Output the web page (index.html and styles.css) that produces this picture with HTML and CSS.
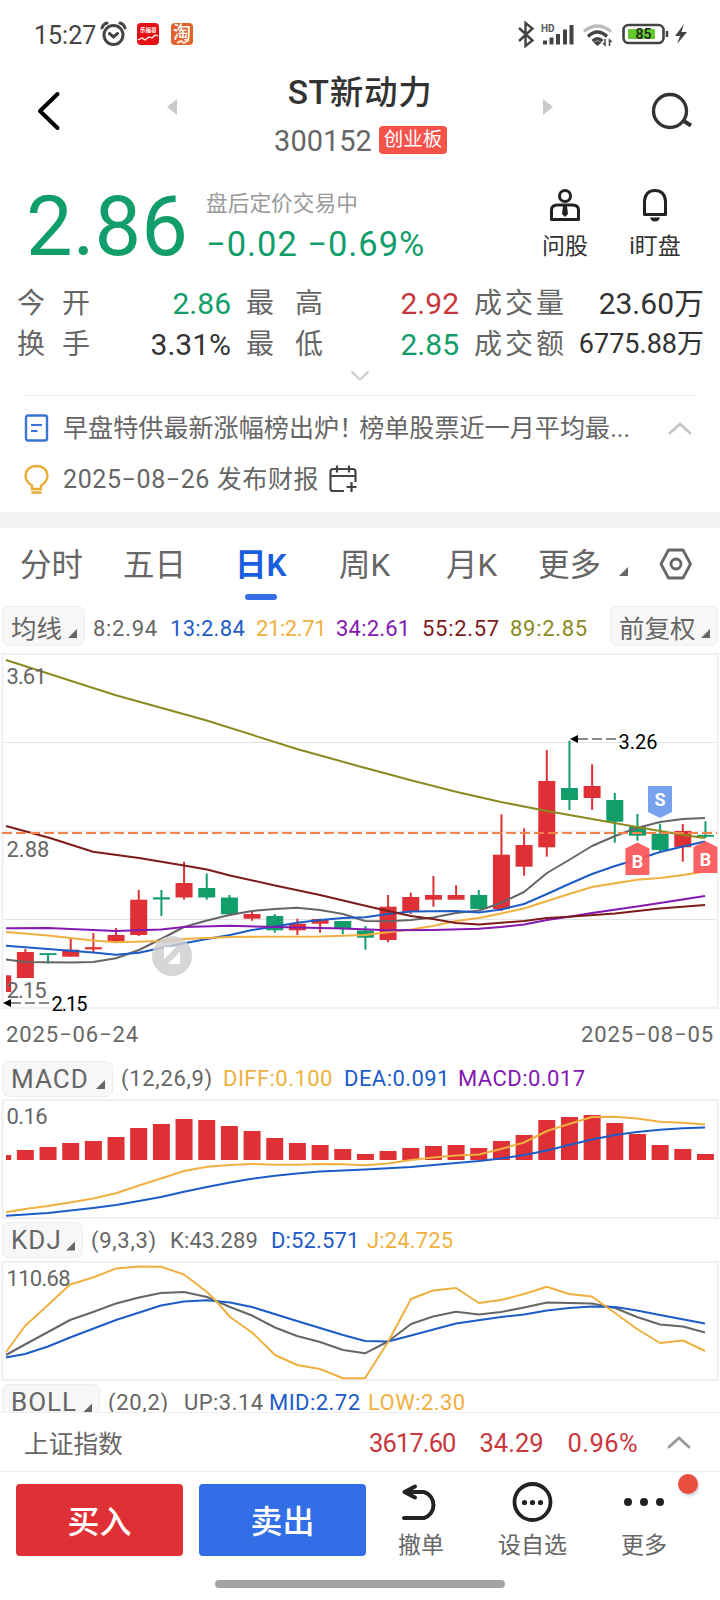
FILE: index.html
```
<!DOCTYPE html>
<html lang="zh-CN">
<head>
    <meta charset="UTF-8">
    <meta name="viewport" content="width=device-width, initial-scale=1.0">
    <title>ST新动力 300152</title>
    <link rel="stylesheet" href="styles.css">
</head>
<body>
    <div class="status-bar">
        <span class="clock">15:27</span>
        <svg class="status-left" width="100" height="32" viewBox="96 18 100 32">
            <g fill="none" stroke="#444" stroke-width="3" stroke-linecap="round">
                <circle cx="113.5" cy="35" r="9.5"/>
                <path d="M109.500 33.500l4 3.500 4-3.500M102 28q1-4 5-5M125 28q-1-4-5-5"/>
            </g>
            <rect x="137" y="23" width="22" height="22" rx="4" fill="#e60f14"/>
            <text x="140" y="32" font-size="5.500" font-weight="700" fill="#fff">乐福哥</text>
            <path d="M138 40l4-2 3 2 4-3 3 1 3-3 3 1" fill="none" stroke="#fff" stroke-width="1.300"/>
            <rect x="171" y="23" width="22" height="22" rx="4" fill="#e0622c"/>
            <text x="173" y="39" font-size="18" font-weight="500" fill="#fff">淘</text>
            <path d="M177 43l4-2 3 2 5-3" fill="none" stroke="#fbe3d0" stroke-width="2"/>
        </svg>
        <svg class="status-right" width="176" height="32" viewBox="514 18 176 32">
            <path d="M519 28l13.500 12.500-7 5.500V23l7 5.500L519 41" fill="none" stroke="#444" stroke-width="2.400"/>
            <text x="541" y="32" font-size="10" font-weight="700" fill="#555">HD</text>
            <path d="M545 44.500v-4M551.500 44.500v-7M558 44.500V34M565 44.500V29.500M571.500 44.500V25" stroke="#444" stroke-width="4"/>
            <g fill="none" stroke="#444" stroke-width="3.200">
                <path d="M584 31.500q13-11 27 0" stroke="#bbb"/>
                <path d="M588 36.500q9.500-9 19 0M592.500 41q5-4.500 10 0"/>
            </g>
            <path d="M593.500 42.500l4 3.500 4-3.500q-4-3-8 0z" fill="#444"/>
            <path d="M605 39v6l-2-2M609.500 46v-6l2 2" fill="none" stroke="#444" stroke-width="1.500"/>
            <rect x="623.500" y="25" width="40" height="18" rx="5" fill="none" stroke="#444" stroke-width="2.600"/>
            <rect x="628" y="29" width="27" height="10" rx="1" fill="#63c92c"/>
            <path d="M667 31v6" stroke="#444" stroke-width="2.500"/>
            <text x="635.500" y="38.500" font-size="14" font-weight="500" fill="#222">85</text>
            <path d="M684 24l-9 12h5l-3 8 10-12h-5.500z" fill="#444"/>
        </svg>
    </div>

    <header class="header">
        <svg class="icon-back" width="30" height="42" viewBox="0 0 30 42"><path d="M22.500 4L5 21l17.500 17" fill="none" stroke="#000" stroke-width="4" stroke-linecap="round" stroke-linejoin="round"/></svg>
        <svg class="icon-prev" width="10" height="16" viewBox="0 0 10 16"><path d="M10 0v16L0 8z" fill="#cacaca"/></svg>
        <div class="title-box">
            <h1>ST新动力</h1>
            <div class="code-row"><span class="code">300152</span><span class="board">创业板</span></div>
        </div>
        <svg class="icon-next" width="10" height="16" viewBox="0 0 10 16"><path d="M0 0v16l10-8z" fill="#cacaca"/></svg>
        <svg class="icon-search" width="42" height="40" viewBox="0 0 42 40"><circle cx="20" cy="20" r="16.500" fill="none" stroke="#333" stroke-width="3.400"/><path d="M33 29.500l8 5" stroke="#333" stroke-width="4"/></svg>
    </header>

    <section class="quote">
        <div class="price">2.86</div>
        <div class="change">
            <div class="phase">盘后定价交易中</div>
            <div class="diff">−0.02 −0.69%</div>
        </div>
        <div class="quick">
            <svg width="32" height="34" viewBox="0 0 32 34">
                <g fill="none" stroke="#222" stroke-width="3">
                    <circle cx="16" cy="8" r="5.500"/>
                    <path d="M2.500 31.500V22q0-5 6-5h15q6 0 6 5v9.500z" stroke-linejoin="round"/>
                </g>
                <path d="M14 18h4l1 8-3 3-3-3z" fill="#222"/>
            </svg>
            <span>问股</span>
        </div>
        <div class="quick bell">
            <svg width="32" height="34" viewBox="0 0 32 34">
                <path d="M5.500 26.500V13q1-10.500 10.500-10.500T26.500 13v13.500z" fill="none" stroke="#222" stroke-width="3" stroke-linejoin="round"/>
                <path d="M11 29.500h10q-1 4-5 4t-5-4z" fill="#222"/>
            </svg>
            <span>i盯盘</span>
        </div>
    </section>

    <section class="stats">
        <span class="label"><i>今</i><i>开</i></span><b class="down">2.86</b>
        <span class="label"><i>最</i><i>高</i></span><b class="up">2.92</b>
        <span class="label"><i>成</i><i>交</i><i>量</i></span><b>23.60万</b>
        <span class="label"><i>换</i><i>手</i></span><b>3.31%</b>
        <span class="label"><i>最</i><i>低</i></span><b class="down">2.85</b>
        <span class="label"><i>成</i><i>交</i><i>额</i></span><b class="small">6775.88万</b>
    </section>
    <div class="expand"><svg width="20" height="12" viewBox="0 0 20 12"><path d="M1.500 1.500L10 9.500l8.500-8" fill="none" stroke="#c8c8c8" stroke-width="2"/></svg></div>

    <section class="news">
        <div class="news-row">
            <svg width="26" height="30" viewBox="0 0 26 30"><rect x="3" y="2.500" width="21" height="25" rx="2" fill="none" stroke="#3b74d8" stroke-width="2.400"/><path d="M8 12h11M8 18h6.500" stroke="#3b74d8" stroke-width="2.200"/></svg>
            <span class="news-text">早盘特供最新涨幅榜出炉<i class="mark">！</i>榜单股票近一月平均最...</span>
            <svg class="fold" width="24" height="14" viewBox="0 0 24 14"><path d="M2 12L12 3l10 9" fill="none" stroke="#c8c8c8" stroke-width="3" stroke-linecap="round"/></svg>
        </div>
        <div class="news-row">
            <svg width="26" height="30" viewBox="0 0 26 30"><path d="M9 25v-3.500Q2.500 17.500 2.500 11.500 3.500 2 13.500 2t11 9.500Q24.500 17.500 18 21.500V25zM8.500 28.500h10" fill="none" stroke="#ecab33" stroke-width="2.300"/></svg>
            <span class="report">2025−08−26 发布财报</span>
            <svg class="calendar" width="28" height="28" viewBox="0 0 28 28"><path d="M15 26H4q-2.500 0-2.500-2.500V7Q1.500 4 4 4h20q2.500 0 2.500 3v10M1.500 11h25M8 .5v7M20 .5v7M17.500 22h10M22.500 17v10" fill="none" stroke="#444" stroke-width="2.200"/></svg>
        </div>
    </section>

    <nav class="tabs">
        <span>分时</span>
        <span>五日</span>
        <span class="active">日K</span>
        <span>周K</span>
        <span>月K</span>
        <span class="more">更多<i class="corner"></i></span>
        <svg width="34" height="32" viewBox="0 0 34 32"><path d="M9.500 2h14.500L31.500 16 24 30H9.500L2 16z" fill="none" stroke="#666" stroke-width="2.800" stroke-linejoin="round"/><circle cx="17" cy="16" r="5" fill="none" stroke="#666" stroke-width="2.800"/></svg>
    </nav>

    <section class="charts">
        <div class="ma-bar">
            <span class="picker">均线<i class="corner"></i></span>
            <span class="c-gray">8:2.94</span>
            <span class="c-blue">13:2.84</span>
            <span class="c-orange">21:2.71</span>
            <span class="c-purple">34:2.61</span>
            <span class="c-red">55:2.57</span>
            <span class="c-olive">89:2.85</span>
            <span class="picker">前复权<i class="corner"></i></span>
        </div>

        <!-- all charts share one vertical scale, each viewBox is a slice of it -->
        <svg class="chart" id="kline" width="720" height="364" viewBox="0 648 720 364">
            <path class="grid" d="M4 742.500h712M4 831h712M4 919.500h712"/>
            <rect class="frame" x="2.500" y="654" width="715" height="354"/>
        </svg>

        <div class="dates"><span>2025−06−24</span><span>2025−08−05</span></div>

        <div class="ind-bar macd">
            <span class="picker">MACD<i class="corner"></i></span>
            <span class="c-gray params">(12,26,9)</span>
            <span class="c-orange">DIFF:0.100</span>
            <span class="c-blue">DEA:0.091</span>
            <span class="c-purple">MACD:0.017</span>
        </div>
        <svg class="chart" id="macd" width="720" height="124" viewBox="0 1097 720 124">
            <rect class="frame" x="2.500" y="1100" width="715" height="118"/>
        </svg>

        <div class="ind-bar kdj">
            <span class="picker">KDJ<i class="corner"></i></span>
            <span class="c-gray params">(9,3,3)</span>
            <span class="c-gray">K:43.289</span>
            <span class="c-blue">D:52.571</span>
            <span class="c-orange">J:24.725</span>
        </div>
        <svg class="chart" id="kdj" width="720" height="124" viewBox="0 1259 720 124">
            <rect class="frame" x="2.500" y="1262" width="715" height="118"/>
        </svg>

        <div class="ind-bar boll">
            <span class="picker">BOLL<i class="corner"></i></span>
            <span class="c-gray params">(20,2)</span>
            <span class="c-gray">UP:3.14</span>
            <span class="c-blue">MID:2.72</span>
            <span class="c-orange">LOW:2.30</span>
        </div>
    </section>

    <div class="index-bar">
        <span class="index-name">上证指数</span>
        <span class="index-value">3617.60</span>
        <span>34.29</span>
        <span class="index-rate">0.96%</span>
        <svg width="24" height="14" viewBox="0 0 24 14"><path d="M2 12L12 3l10 9" fill="none" stroke="#999" stroke-width="2.800" stroke-linecap="round"/></svg>
    </div>

    <footer class="actions">
        <button class="buy">买入</button>
        <button class="sell">卖出</button>
        <div class="action">
            <svg width="42" height="40" viewBox="0 0 42 40"><path d="M4 36h20a13 13.500 0 0 0 0-26H5M15 4.500L4.500 10 15 15.500" fill="none" stroke="#222" stroke-width="4" stroke-linecap="round" stroke-linejoin="round"/></svg>
            <span>撤单</span>
        </div>
        <div class="action">
            <svg width="42" height="40" viewBox="0 0 42 40"><circle cx="20.500" cy="20" r="18" fill="none" stroke="#222" stroke-width="3.800"/><g fill="#222"><circle cx="12.500" cy="20.500" r="2.600"/><circle cx="20.500" cy="20.500" r="2.600"/><circle cx="28.500" cy="20.500" r="2.600"/></g></svg>
            <span>设自选</span>
        </div>
        <div class="action">
            <svg width="42" height="40" viewBox="0 0 42 40"><g fill="#222"><circle cx="5" cy="20" r="4"/><circle cx="21" cy="20" r="4"/><circle cx="37" cy="20" r="4"/></g></svg>
            <span>更多</span>
            <i class="dot"></i>
        </div>
    </footer>
    <div class="home-bar"></div>

    <script>
        const RED = "#df3135", GREEN = "#129e6b";
        const STEP = 22.67, START = 2.7;

        // [color, high, top, bottom, low]
        const candles = [
            ["r", 975.3, 975.3, 992, 992], ["r", 949, 952, 978, 978], ["g", 953.2, 953.2, 955, 963.5],
            ["r", 938.7, 949.7, 956.7, 956.7], ["r", 933, 947.2, 949.4, 952], ["r", 928, 935, 941.7, 941.7],
            ["r", 890, 899.7, 935, 936], ["g", 890, 897.3, 899.5, 916], ["r", 861.7, 883, 897.5, 899.7],
            ["g", 873.5, 888, 897.5, 899.7], ["g", 895, 897.5, 914.3, 915.3], ["r", 911.3, 914, 918.7, 920.7],
            ["g", 914, 916, 930.3, 932.7], ["r", 918.7, 923.7, 930.3, 935], ["r", 918.7, 919, 923.7, 932.7],
            ["g", 921, 921, 928.3, 934.3], ["g", 926, 930.5, 937.7, 949.7], ["r", 895, 906.7, 940, 942.3],
            ["r", 892.7, 897, 911.7, 914], ["r", 876, 895, 899.7, 906.7], ["r", 885.3, 895, 899.7, 899.7],
            ["g", 890, 895, 909, 909], ["r", 814.3, 854.7, 909, 911], ["r", 828.3, 845, 866.7, 875.7],
            ["r", 750, 781, 847.3, 856.7], ["g", 740.7, 788, 800, 810], ["r", 764.3, 786, 798, 810],
            ["g", 793, 800, 821.7, 842.7], ["g", 814, 826.7, 835.7, 840.7], ["g", 823.7, 833.7, 850, 852],
            ["r", 824, 831, 847.3, 861.7], ["g", 821.3, 834.8, 836.8, 838]
        ];

        // tops of the MACD columns, baseline is 1160
        const macdBars = [1155, 1150, 1147, 1143, 1141, 1137, 1128, 1124, 1119, 1120, 1126, 1131, 1138, 1143, 1145, 1149,
            1154, 1151, 1148, 1146, 1145, 1148, 1141, 1135, 1120, 1117, 1115, 1123, 1134, 1145, 1149, 1154];

        const lines = {
            kline: [
                ["#666666", "6,959.5 25,962 70,962.5 93,962 116,958.3 139,950 161,939 184,927 207,920.5 229.5,915 252,911 275,909 297,907.7 320,910 343,914 365,921 388,921.3 411,920 433,917.5 456,913 479,910.5 501,903 524,892 547,873 569,860 592,846 615,836 637,828 660,822 683,819 705,818"],
                ["#1c5cc8", "6,945.7 48,949 93,952.5 116,954.7 139,952.7 161,948 184,943.3 207,939 230,935 252,930 275,926.5 297,922.7 320,920 343,918 365,917.3 388,914 411,911.5 456,911 479,912.5 501,909.5 524,904 547,894 569,884 592,874 615,866 637,859.5 660,852 683,846.5 705,841.5"],
                ["#f0b040", "6,932 48,935.5 93,940.5 116,942.3 161,941 184,939 230,937 320,936.5 365,935 411,929.5 433,926 456,921 479,918 501,913.5 524,908.5 547,901 569,894 592,887 637,879.7 660,878 683,875 705,871.5"],
                ["#8418b0", "6,928.3 48,928 93,930 116,931 161,929.5 184,927 230,925.7 275,927 343,928.5 388,930.3 433,930 479,928.7 501,927 524,924.5 547,920 569,916.7 592,913 637,906.5 660,903 705,896"],
                ["#7d1a1a", "6,826 50,838 93,851.7 139,858 184,865.5 207,869.5 230,875.5 275,885.5 320,895 360,904.5 388,911 411,916 433,919 456,923 479,924.5 501,922.7 524,921 547,918 569,916.7 615,913.5 660,908.5 705,905"],
                ["#8a8a20", "6,660 115,695 205,720 297,749 360,766.5 410,780 457,792 501,802 547,811 592,819 637,827 660,831 683,835 705,838"]
            ],
            macd: [
                ["#f0b040", "6,1212.3 25,1209 48,1206 70,1202.5 93,1198.5 116,1193.3 139,1185.5 161,1178.5 184,1171 207,1166.7 230,1165 252,1164 275,1164.7 297,1164.7 320,1164 343,1164.3 365,1165.3 388,1163.5 411,1160 433,1157.5 456,1155.5 479,1154.5 501,1149 524,1142.5 547,1131 569,1124 592,1117 615,1116.7 637,1118.5 660,1121.7 683,1122.7 705,1124.5"],
                ["#1c5cc8", "6,1215.7 48,1213 93,1208 116,1205 139,1201 161,1197 184,1191.7 207,1187 230,1182.5 252,1178.7 275,1175.7 297,1173.5 320,1171.5 365,1169.5 411,1167 456,1163 479,1161 501,1158.5 524,1155 547,1150.5 569,1145 592,1139.5 615,1135 637,1132 660,1129.7 683,1128.3 705,1127.5"]
            ],
            kdj: [
                ["#666666", "6,1355 25,1344.5 48,1332 70,1320 93,1312 116,1303.5 139,1297.5 161,1293 184,1292 207,1297 230,1307 252,1315.5 275,1327.5 297,1336 320,1342 343,1350 365,1353.3 388,1341.5 411,1324 433,1316.5 456,1311.7 479,1314.5 501,1312 524,1307.5 547,1302.5 592,1303.5 615,1308 637,1317 660,1324.5 683,1326.5 705,1332.5"],
                ["#1c5cc8", "6,1357.5 25,1354 48,1346.5 70,1337.5 116,1320 161,1305.5 184,1301.5 207,1300.3 230,1302.5 252,1307 297,1321 343,1335 365,1341 388,1341.5 411,1335.5 456,1323.5 501,1317 524,1314.5 547,1310.5 569,1308 592,1306.5 615,1307 637,1310.5 660,1315 705,1323.5"],
                ["#f0b040", "6,1352 25,1326 48,1305 70,1284.5 93,1277.5 116,1268.5 139,1266.5 161,1266.7 184,1274.5 207,1292 218,1303 230,1317 252,1332.5 275,1355 297,1365 320,1369 343,1378.3 365,1378.3 388,1342 411,1299 433,1290.5 456,1288 479,1303 501,1300 524,1294 547,1286.7 569,1294 592,1296.5 615,1313 637,1329 660,1343 683,1340.5 705,1351"]
            ]
        };

        function draw(id, markup) {
            document.getElementById(id).insertAdjacentHTML("beforeend", markup);
        }

        // the first column is cut off at the left edge of the plot
        function column(x, top, bottom, fill) {
            const left = Math.max(6, x - 8.5);
            return `<rect x="${left}" y="${top}" width="${x + 8.5 - left}" height="${bottom - top}" fill="${fill}"/>`;
        }

        candles.forEach(([c, high, top, bottom, low], i) => {
            const x = START + STEP * i;
            const fill = c === "r" ? RED : GREEN;
            if (i > 0) {
                draw("kline", `<path d="M${x} ${high}V${low}" stroke="${fill}" stroke-width="2"/>`);
            }
            draw("kline", column(x, top, bottom, fill));
        });

        macdBars.forEach((top, i) => draw("macd", column(START + STEP * i, top, 1160, RED)));

        for (const id in lines) {
            lines[id].forEach(([color, points]) => {
                draw(id, `<polyline class="line" points="${points}" stroke="${color}"/>`);
            });
        }

        // last price, trade marks and labels
        draw("kline", `
            <path class="last" d="M2 833H717"/>
            <path d="M648 786h24v26l-12 6-12-6z" fill="#78a2ee"/>
            <text class="mark-text" x="660" y="806">S</text>
            <path d="M637.400 842.500l12 6V875h-24v-26.500z" fill="#fb5658" fill-opacity=".93"/>
            <text class="mark-text" x="637.400" y="867.500">B</text>
            <path d="M705.400 841l12 6v26h-24v-26z" fill="#fb5658" fill-opacity=".93"/>
            <text class="mark-text" x="705.400" y="865.500">B</text>
            <circle cx="172" cy="956" r="20" fill="#cfcfcf" fill-opacity=".85"/>
            <path d="M164 947h12l-12 12zM180 952v12h-12z" fill="#fff"/>
            <text class="axis" x="6.500" y="683.500" textLength="40">3.61</text>
            <text class="axis" x="6.500" y="857">2.88</text>
            <text class="axis" x="6.500" y="998" textLength="40">2.15</text>
            <path d="M570 739l8-4v8zM3 1003l8-4v8z"/>
            <path class="lead" d="M578 739h38M11 1003h38"/>
            <text class="peak" x="618.500" y="749">3.26</text>
            <text class="peak" x="51.500" y="1010.500" textLength="36">2.15</text>`);
        draw("macd", `<text class="axis" x="6.500" y="1124" textLength="41">0.16</text>`);
        draw("kdj", `<text class="axis" x="6.500" y="1286" textLength="64">110.68</text>`);
    </script>
</body>
</html>
```
FILE: styles.css
```
:root {
    --up: #c9373c;
    --down: #129e6b;
    --text: #333;
    --muted: #666;
    --blue: #1c5cc8;
    --line: #eee;
}

* {
    box-sizing: border-box;
}

body {
    margin: 0;
    width: 720px;
    height: 1600px;
    overflow: hidden;
    display: flex;
    flex-direction: column;
    background: #fff;
    color: var(--text);
    font-family: Roboto, "Noto Sans CJK SC", sans-serif;
}

body > * {
    flex-shrink: 0;
}

i {
    font-style: normal;
}

svg {
    display: block;
    flex-shrink: 0;
}

/* status bar */
.status-bar {
    height: 68px;
    padding: 0 30px 0 34px;
    display: flex;
    align-items: center;
}

.clock {
    width: 62px;
    font-size: 25px;
    line-height: 30px;
    color: #444;
    padding-top: 3px;
}

.status-right {
    margin-left: auto;
}

/* header */
.header {
    height: 100px;
    display: flex;
    padding-left: 35px;
}

.icon-back {
    margin-top: 22px;
}

.icon-prev {
    margin: 31px 0 0 102px;
}

.title-box {
    width: 366px;
    text-align: center;
}

h1 {
    margin: 3px 0 0;
    font-size: 33.5px;
    font-weight: 500;
    line-height: 44px;
    letter-spacing: 0.7px;
}

.code-row {
    display: flex;
    justify-content: center;
    align-items: center;
    margin: 8px 0 0 1px;
    height: 34px;
}

.code {
    font-size: 29px;
    color: var(--muted);
    margin-right: 7px;
    padding-top: 1px;
}

.board {
    height: 28px;
    width: 68px;
    border-radius: 4px;
    background: #f5524a;
    color: #fff;
    font-size: 19.5px;
    line-height: 27px;
}

.icon-next {
    margin-top: 31px;
}

.icon-search {
    margin: 23px 0 0 97px;
}

/* quote */
.quote {
    height: 108px;
    display: flex;
    padding: 20px 0 0 26px;
}

.price {
    width: 180px;
    font-size: 83px;
    line-height: 78px;
    color: var(--down);
}

.change {
    width: 320px;
}

.phase {
    font-size: 21.7px;
    line-height: 28px;
    padding-top: 2px;
    color: #999;
}

.diff {
    margin-top: 5px;
    font-size: 34.5px;
    line-height: 42px;
    letter-spacing: 0.95px;
    color: var(--down);
}

.quick {
    width: 78px;
    display: flex;
    flex-direction: column;
    align-items: center;
    font-size: 23px;
    line-height: 30px;
}

.quick span {
    margin-top: 10px;
    white-space: nowrap;
}

.bell {
    margin-left: 12px;
}

/* stats */
.stats {
    display: grid;
    grid-template-columns: 73px 141px 92px 136px 105px 140px;
    grid-auto-rows: 41px;
    height: 88px;
    padding: 7px 0 0 17px;
}

.stats .label {
    display: flex;
    justify-content: space-between;
    color: var(--muted);
    font-size: 28px;
    line-height: 41px;
}

.stats .label:not(:nth-child(6n + 1)) {
    padding-left: 15px;
}

.stats b {
    font-weight: 400;
    font-size: 30px;
    line-height: 41px;
    text-align: right;
}

.stats .small {
    font-size: 27px;
}

.stats .up {
    color: var(--up);
}

.stats .down {
    color: var(--down);
}

.expand {
    height: 31px;
    display: flex;
    justify-content: center;
    padding-top: 6px;
}

/* news */
.news {
    margin: 0 23px;
    height: 117px;
    border-top: 1px solid #ececec;
    padding-top: 6px;
    color: var(--muted);
    font-size: 25px;
}

.news-row {
    display: flex;
    align-items: center;
    height: 51px;
}

.news-row span {
    margin-left: 14px;
    padding-bottom: 4px;
    white-space: nowrap;
}

.news-text {
    letter-spacing: 0.1px;
}

.report {
    letter-spacing: 0.6px;
}

.mark {
    letter-spacing: -5px;
}

.fold {
    margin-left: auto;
    margin-right: 5px;
}

.calendar {
    margin-left: 10px;
}

/* period tabs */
.tabs {
    height: 90px;
    border-top: 16px solid #f4f4f4;
    padding: 0 27px 0 20px;
    display: grid;
    grid-template-columns: 103px 112px 104px 107px 92px 1fr auto;
    align-items: start;
    color: var(--muted);
    font-size: 31.5px;
    line-height: 75px;
}

.tabs span {
    white-space: nowrap;
}

.tabs svg {
    margin-top: 20px;
}

.tabs .active {
    color: #1a5ee0;
    font-weight: 600;
    display: flex;
    flex-direction: column;
}

.tabs .active::after {
    content: "";
    width: 32px;
    height: 6px;
    margin: -9px 0 0 10px;
    border-radius: 3px;
    background: #356fe6;
}

.corner {
    display: inline-block;
    width: 9px;
    height: 9px;
    background: var(--muted);
    clip-path: polygon(100% 0, 100% 100%, 0 100%);
}

.tabs .corner {
    margin-left: 18px;
}

/* charts */
.charts {
    height: 810px;
    overflow: hidden;
    font-size: 22px;
}

.c-gray { color: var(--muted); }
.c-blue { color: var(--blue); }
.c-orange { color: #f0b040; }
.c-purple { color: #8418b0; }
.c-red { color: #7d1a1a; }
.c-olive { color: #8a8a20; }

.picker {
    border: 1px solid var(--line);
    border-radius: 7px;
    background: #f7f7f7;
    color: var(--muted);
    font-size: 25.5px;
    height: 100%;
    padding: 0 7px 0 8px;
    display: flex;
    align-items: center;
    justify-content: space-between;
}

.picker .corner {
    margin-top: 15px;
}

.ma-bar {
    display: grid;
    grid-template-columns: 91px 77px 86px 80px 86px 88px 100px 108px;
    align-items: center;
    height: 46px;
    padding: 4px 0 2px 2px;
    letter-spacing: 0.7px;
}

.ma-bar .c-gray,
.ma-bar .c-blue,
.ma-bar .c-orange,
.ma-bar .c-purple,
.ma-bar .c-red,
.ma-bar .c-olive {
    padding-top: 4px;
}

.ma-bar .c-blue {
    letter-spacing: 0.3px;
}

.ma-bar .c-orange {
    letter-spacing: -0.4px;
}

.ma-bar .c-purple {
    letter-spacing: 0.2px;
}

.ma-bar .picker {
    letter-spacing: 0;
}

.ma-bar .picker:first-child {
    margin-right: 8px;
}

.frame {
    fill: none;
    stroke: #f0f0f0;
    stroke-width: 2;
}

.grid {
    stroke: #e2e2e2;
    stroke-width: 1;
}

.line {
    fill: none;
    stroke-width: 2;
    stroke-linejoin: round;
}

.last {
    stroke: #f5824a;
    stroke-width: 2;
    stroke-dasharray: 10 4;
}

.lead {
    stroke: #666;
    stroke-width: 1.5;
    stroke-dasharray: 10 4;
}

.axis {
    font-size: 22px;
    fill: var(--muted);
}

.peak {
    font-size: 20px;
    fill: #000;
}

.mark-text {
    font-size: 18px;
    font-weight: 700;
    fill: #fff;
    text-anchor: middle;
}

.dates {
    height: 48px;
    display: flex;
    justify-content: space-between;
    padding: 0 6px 0 6px;
    line-height: 46px;
    letter-spacing: 0.9px;
    color: var(--muted);
}

.ind-bar {
    display: grid;
    align-items: center;
    height: 37px;
    padding-left: 2px;
    letter-spacing: 0.45px;
}

.ind-bar .picker {
    height: 36px;
    font-size: 26px;
    letter-spacing: 1px;
}

.ind-bar .picker .corner {
    margin-top: 12px;
}

.macd { grid-template-columns: 111px 100px 121px 114px 140px; }
.kdj { grid-template-columns: 81px 77px 101px 96px 110px; height: 38px; letter-spacing: 0.15px; }
.boll { grid-template-columns: 98px 74px 85px 99px 120px; padding-top: 1px; }

.ind-bar .params {
    padding-left: 8px;
    letter-spacing: 0.7px;
}

.ind-bar .params ~ span {
    padding-left: 10px;
}

/* market index */
.index-bar {
    height: 60px;
    border-top: 1px solid var(--line);
    border-bottom: 1px solid var(--line);
    background: #fff;
    display: flex;
    align-items: center;
    padding: 0 29px 0 24px;
    font-size: 25.5px;
    color: var(--up);
}

.index-name {
    color: var(--muted);
    font-size: 24.7px;
    margin-right: auto;
}

.index-bar span + span {
    margin-right: 24px;
    padding-top: 2px;
}

.index-bar .index-value {
    letter-spacing: -0.9px;
}

.index-bar .index-rate {
    letter-spacing: 0.4px;
    margin-right: 22px;
}

.index-bar svg {
    margin-left: 7px;
}

/* bottom actions */
.actions {
    height: 100px;
    display: flex;
    padding: 12px 0 0 16px;
}

.actions button {
    width: 167px;
    height: 72px;
    margin-right: 16px;
    padding: 0 0 2px;
    border: 0;
    border-radius: 4px;
    color: #fff;
    font-family: inherit;
    font-size: 32px;
    font-weight: 500;
}

.buy {
    background: #df3135;
}

.sell {
    background: #326ee6;
}

.action {
    position: relative;
    width: 112px;
    display: flex;
    flex-direction: column;
    align-items: center;
    font-size: 23px;
    line-height: 30px;
    color: var(--muted);
    margin-top: -2px;
}

.actions button + .action {
    width: 78px;
}

.actions button + .action + .action {
    width: 145px;
}

.action span {
    margin-top: 9px;
}

.action:last-child {
    width: 78px;
}

.dot {
    position: absolute;
    top: -8px;
    right: -15px;
    width: 20px;
    height: 20px;
    border-radius: 50%;
    background: #e94f40;
    box-shadow: 1px 2px 3px rgba(0, 0, 0, 0.2);
}

.home-bar {
    width: 290px;
    height: 8px;
    margin: 8px auto 0;
    border-radius: 4px;
    background: #a2a2a2;
}
```
